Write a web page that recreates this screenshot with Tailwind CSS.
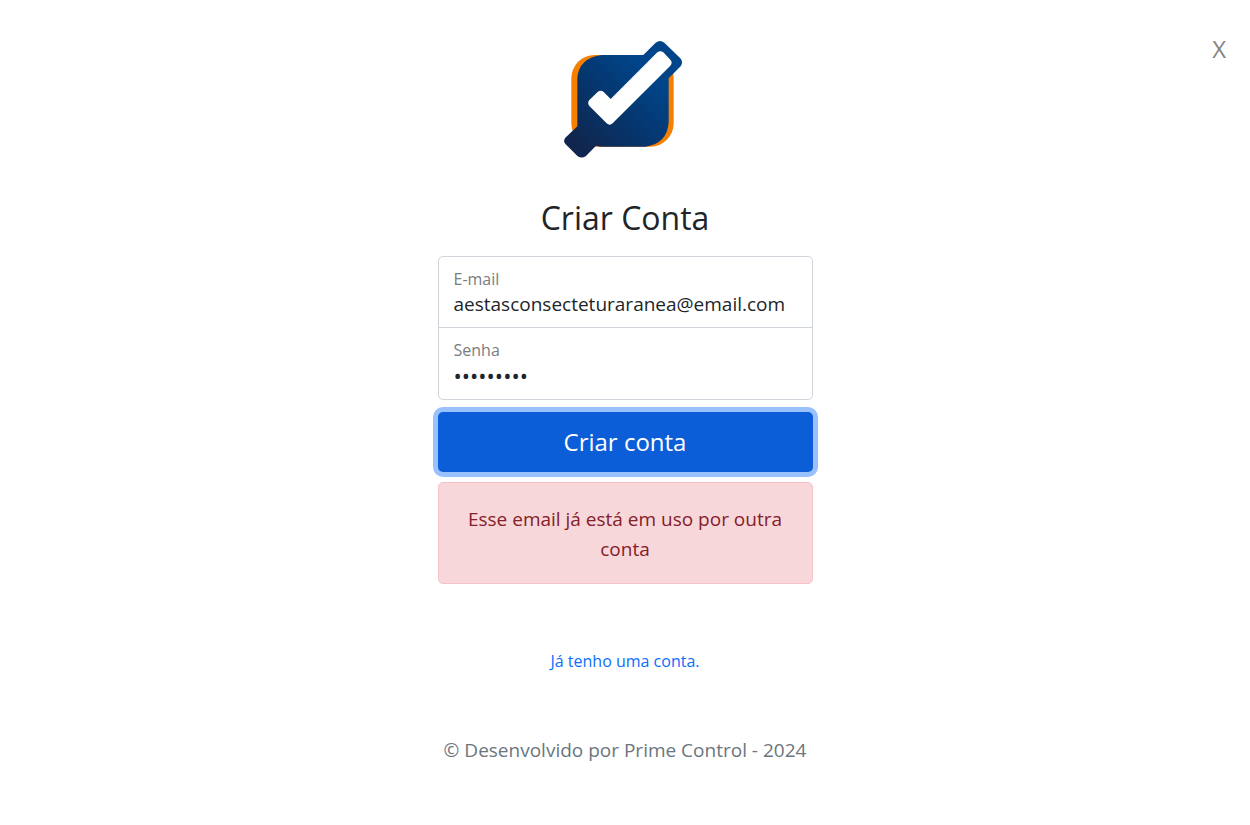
<!DOCTYPE html>
<html lang="pt-BR">
<head>
<meta charset="utf-8">
<meta name="viewport" content="width=device-width, initial-scale=1">
<title>Criar Conta</title>
<script src="https://cdn.jsdelivr.net/npm/@tailwindcss/browser@4"></script>
</head>
<body class="min-h-screen bg-white font-['Segoe_UI','Open_Sans','Noto_Sans',sans-serif] text-[19px] leading-[30px] text-[#212529]">
<a href="#" aria-label="Fechar" class="absolute top-[34px] right-6 text-2xl leading-[30px] text-[#858585]">X</a>
<main class="mx-auto flex max-w-[375px] flex-col items-center pt-10 text-center">
  <svg class="h-[120px] w-[122px] overflow-visible" viewBox="42 30 366 360" role="img" aria-label="Prime Control">
    <defs>
      <linearGradient id="blue" gradientUnits="userSpaceOnUse" x1="90" y1="340" x2="300" y2="130">
        <stop offset="0" stop-color="#10264f"/>
        <stop offset=".5" stop-color="#05366d"/>
        <stop offset="1" stop-color="#004489"/>
      </linearGradient>
    </defs>
    <rect x="64" y="75" width="307" height="275" rx="70" fill="#f47f00"/>
    <path fill="url(#blue)" d="M156 75H280L317 38Q330 28 343 38L391 85Q401 97 392 109L356 145V276Q352 341 286 350H156Q147 350 138 347L108 378Q96 387 83 379L47 343Q38 333 46 323L82 289V145Q86 84 156 75Z"/>
    <path fill="#fff" d="M322 67Q331 60 340 67L361 89Q369 98 361 107L188 280Q179 288 170 280L118 228Q111 219 118 210L143 186Q152 179 161 186L182 207Z"/>
  </svg>
  <h1 class="mt-9 text-[32px] leading-[44px]">Criar Conta</h1>
  <form class="mt-4 flex w-full flex-col" onsubmit="return false">
    <div class="flex flex-col rounded-t-[5px] border border-[#ced4da] px-[15px] py-[10px] text-left">
      <label for="email" class="text-base leading-[24px] text-[#7a7c7f]">E-mail</label>
      <input id="email" type="email" value="aestasconsecteturaranea@email.com" class="h-[26px] w-full bg-transparent leading-[26px] outline-none">
    </div>
    <div class="-mt-px flex flex-col rounded-b-[5px] border border-[#ced4da] px-[15px] pt-[10px] pb-[11px] text-left">
      <label for="senha" class="text-base leading-[24px] text-[#7a7c7f]">Senha</label>
      <input id="senha" type="password" value="abcdefghi" class="h-[26px] w-full bg-transparent text-[22px] leading-[26px] outline-none">
    </div>
    <button type="submit" class="mt-3 h-[60px] rounded-[5px] bg-[#0b5ed7] text-2xl text-white shadow-[0_0_0_5px_#98c1fe] outline-none">Criar conta</button>
    <div role="alert" class="mt-[10px] rounded-[5px] border border-[#f5c2c7] bg-[#f8d7da] px-5 pt-[21px] pb-[19px] text-[#842029]">Esse email já está em uso por outra conta</div>
  </form>
  <a href="#" class="mt-[62px] text-base leading-[30px] text-[#0d6efd]">Já tenho uma conta.</a>
  <p class="mt-[59px] whitespace-nowrap text-[#6c757d]">© Desenvolvido por Prime Control - 2024</p>
</main>
</body>
</html>
